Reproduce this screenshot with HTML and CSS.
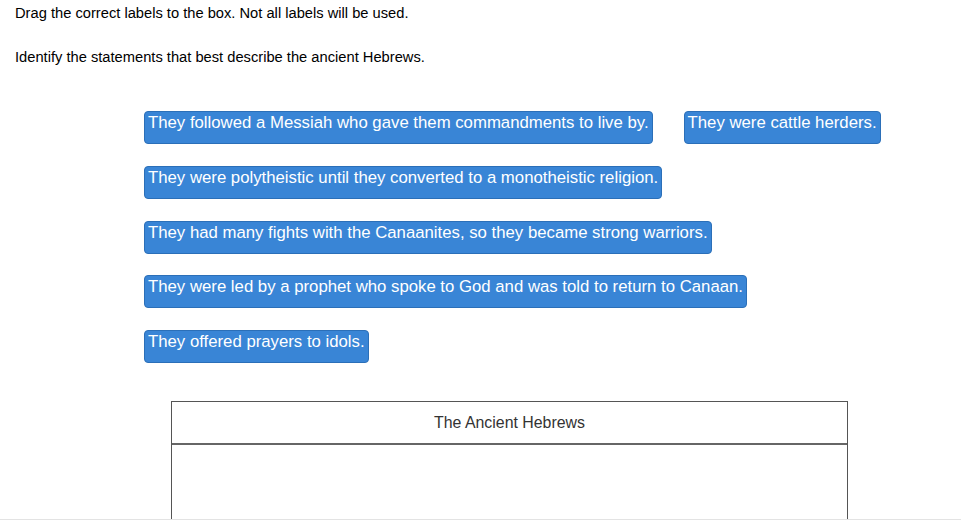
FILE: index.html
```html
<!DOCTYPE html>
<html lang="en">
<head>
    <meta charset="UTF-8">
    <title>Drag and Drop - Ancient Hebrews</title>
    <link rel="stylesheet" href="styles.css">
</head>
<body>
    <div class="page">
        <!-- instructions -->
        <p class="direction">Drag the correct labels to the box. Not all labels will be used.</p>
        <p class="question">Identify the statements that best describe the ancient Hebrews.</p>

        <!-- label bank -->
        <div class="label-bank">
            <div class="label-row">
                <div class="label">They followed a Messiah who gave them commandments to live by.</div>
                <div class="label">They were cattle herders.</div>
            </div>
            <div class="label-row">
                <div class="label">They were polytheistic until they converted to a monotheistic religion.</div>
            </div>
            <div class="label-row">
                <div class="label">They had many fights with the Canaanites, so they became strong warriors.</div>
            </div>
            <div class="label-row">
                <div class="label">They were led by a prophet who spoke to God and was told to return to Canaan.</div>
            </div>
            <div class="label-row">
                <div class="label">They offered prayers to idols.</div>
            </div>
        </div>

        <!-- drop box -->
        <div class="drop-box">
            <div class="drop-header">The Ancient Hebrews</div>
            <div class="drop-area"></div>
        </div>
    </div>
</body>
</html>
```

FILE: styles.css
```css
/* general */
body {
    margin: 0;
    padding: 0;
    background-color: #fff;
    font-family: "Liberation Sans", Arial, sans-serif;
    color: #000;
}

.page {
    height: 519px;
    overflow: hidden;
    border-bottom: 1px solid #e3e3e3;
}

/* instructions */
.direction,
.question {
    margin: 0;
    padding-left: 15px;
    font-size: 14.7px;
    line-height: 16px;
}

.direction {
    padding-top: 5px;
}

.question {
    margin-top: 28px;
}

/* label bank */
.label-bank {
    display: flex;
    flex-direction: column;
    gap: 21.75px;
    margin: 46px 0 0 144px;
}

.label-row {
    display: flex;
    gap: 31px;
}

.label {
    background-color: #3985d6;
    border: 1px solid #2b6fb8;
    border-radius: 4px;
    color: #fff;
    font-size: 16.75px;
    line-height: 18px;
    padding: 2px 3px 11px 3px;
    white-space: nowrap;
    cursor: move;
}

/* drop box */
.drop-box {
    width: 675px;
    margin: 38px 0 0 171px;
    border: 1px solid #555;
    border-bottom: none;
}

.drop-header {
    height: 41px;
    line-height: 41px;
    text-align: center;
    font-size: 15.9px;
    color: #333;
    border-bottom: 2px solid #666;
}

.drop-area {
    height: 200px;
}
```
